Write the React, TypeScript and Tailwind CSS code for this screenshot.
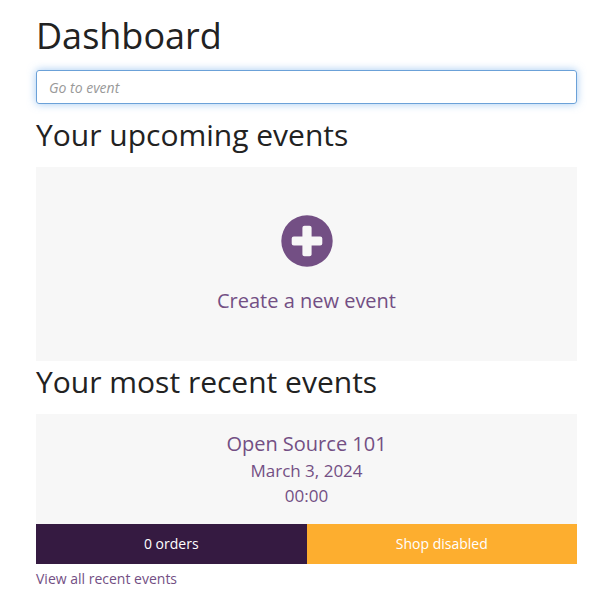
import { useState } from 'react';

interface RecentEvent {
    name: string;
    date: string;
    time: string;
    orders: number;
    shopEnabled: boolean;
}

const recentEvents: RecentEvent[] = [
    { name: 'Open Source 101', date: 'March 3, 2024', time: '00:00', orders: 0, shopEnabled: false },
];

function PlusCircle() {
    return (
        <svg viewBox="0 0 52 52" className="w-[52px] h-[52px]" fill="currentColor" aria-hidden="true">
            <path
                fillRule="evenodd"
                d="M26 0.3a25.7 25.7 0 1 0 0 51.4a25.7 25.7 0 1 0 0-51.4zM23.5 10.7h5q2.1 0 2.1 2.1v8.6h8.6q2.1 0 2.1 2.1v5q0 2.1-2.1 2.1h-8.6v8.6q0 2.1-2.1 2.1h-5q-2.1 0-2.1-2.1v-8.6h-8.6q-2.1 0-2.1-2.1v-5q0-2.1 2.1-2.1h8.6v-8.6q0-2.1 2.1-2.1z"
            />
        </svg>
    );
}

function EventCard({ event }: { event: RecentEvent }) {
    return (
        <div className="bg-[#f7f7f7]">
            <a href="#event" className="block py-4 text-center text-[#734f84]">
                <span className="block text-[20px] leading-7">{event.name}</span>
                <span className="block text-[17px] leading-[25px]">{event.date}</span>
                <span className="block text-[17px] leading-[25px]">{event.time}</span>
            </a>
            <div className="grid grid-cols-2 text-center text-sm text-white">
                <a href="#orders" className="py-[10px] bg-[#351a41]">{event.orders} orders</a>
                <a href="#shop" className="py-[10px] bg-[#fdae2f]">
                    {event.shopEnabled ? 'Shop enabled' : 'Shop disabled'}
                </a>
            </div>
        </div>
    );
}

export default function App() {
    const [query, setQuery] = useState('');

    return (
        <main className="pl-9 pr-[30px] pt-4 bg-white text-[#222222] font-['Open_Sans',sans-serif]">
            <h1 className="text-[36px] leading-10">Dashboard</h1>
            <input
                type="text"
                aria-label="Go to event"
                placeholder="Go to event"
                value={query}
                onChange={(e) => setQuery(e.target.value)}
                className="block w-full h-[34px] mt-[14px] px-3 text-sm rounded-[3px] border border-[#6ba1d8] outline-none shadow-[0_0_8px_rgba(102,165,233,0.6)] placeholder:italic placeholder:text-[#999999]"
            />
            <h2 className="mt-3 mb-[14px] text-[30px] leading-[37px]">Your upcoming events</h2>
            <a
                href="#create"
                className="flex flex-col items-center gap-[18px] pt-12 pb-11 bg-[#f7f7f7] text-[#734f84]"
            >
                <PlusCircle />
                <span className="text-[20px] leading-8">Create a new event</span>
            </a>
            <h2 className="mt-[2px] mb-[14px] text-[30px] leading-[37px]">Your most recent events</h2>
            {recentEvents.map((event) => (
                <EventCard key={event.name} event={event} />
            ))}
            <a href="#recent" className="inline-block mt-[5px] text-sm text-[#734f84]">
                View all recent events
            </a>
        </main>
    );
}
